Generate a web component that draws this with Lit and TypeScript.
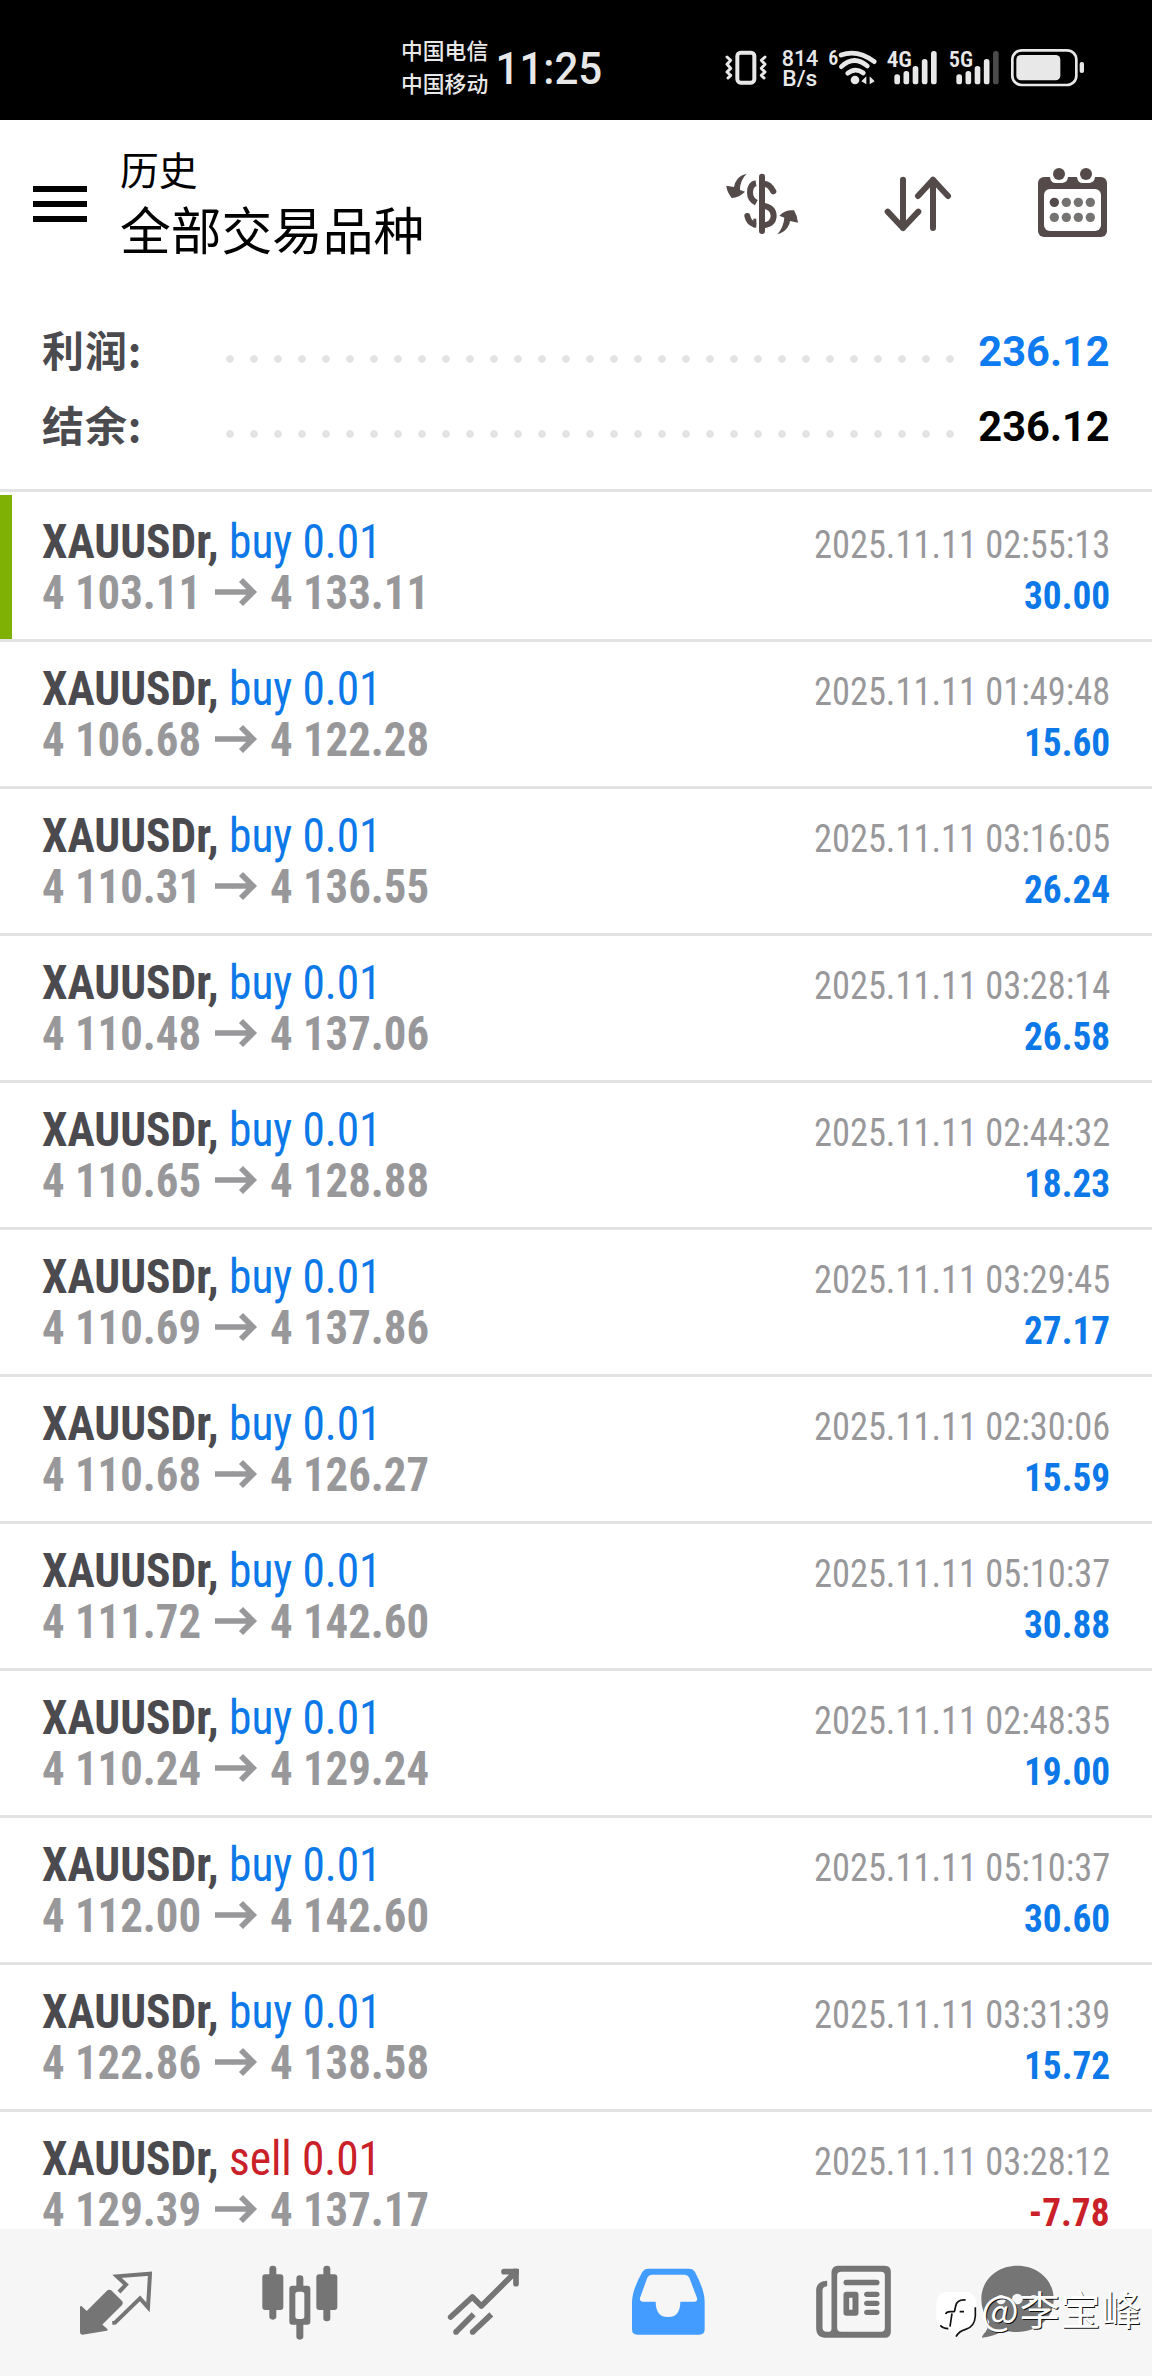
import { LitElement, html, svg, css } from "lit";
import { customElement, property } from "lit/decorators.js";
import { classMap } from "lit/directives/class-map.js";

interface Deal {
  side: "buy" | "sell";
  open: string;
  close: string;
  time: string;
  profit: string;
}

const deal = (side: "buy" | "sell", open: string, close: string, time: string, profit: string): Deal => ({
  side,
  open,
  close,
  time,
  profit,
});

const DEALS: Deal[] = [
  deal("buy", "4 103.11", "4 133.11", "2025.11.11 02:55:13", "30.00"),
  deal("buy", "4 106.68", "4 122.28", "2025.11.11 01:49:48", "15.60"),
  deal("buy", "4 110.31", "4 136.55", "2025.11.11 03:16:05", "26.24"),
  deal("buy", "4 110.48", "4 137.06", "2025.11.11 03:28:14", "26.58"),
  deal("buy", "4 110.65", "4 128.88", "2025.11.11 02:44:32", "18.23"),
  deal("buy", "4 110.69", "4 137.86", "2025.11.11 03:29:45", "27.17"),
  deal("buy", "4 110.68", "4 126.27", "2025.11.11 02:30:06", "15.59"),
  deal("buy", "4 111.72", "4 142.60", "2025.11.11 05:10:37", "30.88"),
  deal("buy", "4 110.24", "4 129.24", "2025.11.11 02:48:35", "19.00"),
  deal("buy", "4 112.00", "4 142.60", "2025.11.11 05:10:37", "30.60"),
  deal("buy", "4 122.86", "4 138.58", "2025.11.11 03:31:39", "15.72"),
  deal("sell", "4 129.39", "4 137.17", "2025.11.11 03:28:12", "-7.78"),
];

@customElement("status-bar")
class StatusBar extends LitElement {
  static styles = css`
    :host {
      display: flex;
      height: 120px;
      box-sizing: border-box;
      padding: 0 66px 0 401px;
      align-items: flex-start;
      background: #000;
      color: #e8e8e8;
    }
    .carriers {
      padding-top: 33px;
      font: 500 21.8px/33px "Noto Sans CJK SC", sans-serif;
      white-space: nowrap;
    }
    .clock {
      padding: 43px 0 0 8px;
      font: 500 45px/52px Roboto, sans-serif;
      transform: scaleX(0.935);
      transform-origin: 0 0;
    }
    .icons {
      margin: 27px 0 0 auto;
      width: 366px;
      height: 60px;
      fill: #e8e8e8;
      font-family: Roboto, sans-serif;
      font-weight: 500;
    }
    .narrow {
      font-stretch: 75%;
      font-weight: 600;
    }
    .line {
      fill: none;
      stroke: #e8e8e8;
      stroke-linecap: round;
      stroke-linejoin: round;
    }
    .dim {
      fill: #4a4a4a;
    }
  `;
  render() {
    const bars = (x: number, dimLast: boolean) =>
      [163, 153, 138, 117, 93].map(
        (y, i) => svg`<rect class=${dimLast && i === 4 ? "dim" : ""} x=${x + i * 27.5} y=${y} width="17" height=${193 - y} rx="8"/>`
      );
    return html`
      <div class="carriers"><div>中国电信</div><div>中国移动</div></div>
      <div class="clock">11:25</div>
      <svg class="icons" viewBox="60 21 1098 180">
        <rect class="line" x="112" y="98" width="51" height="90" rx="10" stroke-width="12" />
        <path class="line" stroke-width="9" d="M81 111l11 10-11 12 11 12-11 11 11 10-8 8M195 111l-11 10 11 12-11 12 11 11-11 10 8 8" />
        <text x="245" y="137" font-size="66" textLength="110" lengthAdjust="spacingAndGlyphs">814</text>
        <text x="247" y="198" font-size="64" textLength="105" lengthAdjust="spacingAndGlyphs">B/s</text>
        <text class="narrow" x="385" y="135" font-size="60" textLength="30" lengthAdjust="spacingAndGlyphs">6</text>
        <path class="line" stroke-width="14" d="M423 105q50-18 100 20M424 140q38-36 78-2M443 160q22-19 47-1" />
        <circle cx="465" cy="180" r="13" />
        <path d="M499 169v24l-15-9zM509 169v24l15-9z" />
        <text class="narrow" x="560" y="141" font-size="67" textLength="76" lengthAdjust="spacingAndGlyphs">4G</text>
        ${bars(583, false)}
        <text class="narrow" x="746" y="141" font-size="67" textLength="73" lengthAdjust="spacingAndGlyphs">5G</text>
        ${bars(769, true)}
        <rect class="line" x="937" y="91" width="192" height="104" rx="28" stroke-width="8" />
        <rect x="949" y="105" width="132" height="76" rx="14" />
        <rect x="1139" y="126" width="13" height="33" rx="6" />
      </svg>
    `;
  }
}

@customElement("title-bar")
class TitleBar extends LitElement {
  static styles = css`
    :host {
      display: flex;
      height: 188px;
      box-sizing: border-box;
      padding: 0 43px 0 33px;
      align-items: flex-start;
    }
    .menu {
      display: grid;
      gap: 9px;
      width: 54px;
      margin-top: 66px;
    }
    .stroke {
      height: 6px;
      background: #000;
    }
    .titles {
      margin: 23px auto 0 33px;
      color: #000;
      font-family: "Noto Sans CJK SC", sans-serif;
    }
    .section {
      font-size: 38.8px;
      line-height: 50px;
    }
    .symbol {
      font-size: 50.7px;
      line-height: 71px;
    }
    .actions {
      display: flex;
      gap: 84px;
      margin-top: 47px;
    }
    svg {
      display: block;
      height: 73px;
      fill: #544a49;
    }
    .calendar {
      margin-left: 1px;
    }
    .line {
      fill: none;
      stroke: #544a49;
      stroke-width: 18px;
      stroke-linecap: round;
      stroke-linejoin: round;
    }
    .butt {
      stroke-linecap: butt;
    }
    .pale {
      fill: #fff;
    }
    .dot {
      fill: #757272;
    }
  `;
  render() {
    return html`
      <div class="menu"><div class="stroke"></div><div class="stroke"></div><div class="stroke"></div></div>
      <div class="titles">
        <div class="section">历史</div>
        <div class="symbol">全部交易品种</div>
      </div>
      <div class="actions">
        <svg width="76" viewBox="72 81 228 219">
          <rect x="177" y="101" width="18" height="181" rx="9" />
          <path class="line butt" d="M168 130Q150 133 150 158Q150 178 169 188" />
          <path class="line" d="M192 131Q209 132 220 154" />
          <path class="line butt" d="M190 197Q221 203 221 228Q220 252 192 256" />
          <path class="line" d="M142 228Q146 247 160 252" />
          <rect x="160" y="236" width="9" height="27" />
          <path d="M140 101Q121 106 113 116Q104 127 102 141L79 137Q80 154 95 174Q118 172 135 155L120 150Q119 122 140 101Z" />
          <path d="M232 283Q252 277 262 263Q270 253 270 243L294 248Q293 229 282 211Q257 208 238 227L253 233Q251 261 232 283Z" />
        </svg>
        <svg width="68" viewBox="552 81 204 219">
          <path class="line" d="M609 119V264M563 215L609 264L655 215M699 264V119M654 168L699 119L744 168" />
        </svg>
        <svg class="calendar" width="72" viewBox="1011 81 216 219">
          <rect x="1014" y="111" width="207" height="180" rx="18" />
          <path class="pale" d="M1050 108V111Q1052 129 1067 129H1087Q1103 127 1104 111V108zM1131 108V111Q1133 129 1148 129H1168Q1184 127 1185 111V108z" />
          <circle cx="1077" cy="102" r="18" />
          <circle cx="1158" cy="102" r="18" />
          <rect class="pale" x="1032" y="147" width="171" height="126" rx="18" />
          ${[187, 232].map((y) =>
            [1063, 1099, 1135, 1171].map(
              (x) => svg`<circle class=${y === 187 && x === 1063 ? "" : "dot"} cx=${x} cy=${y} r="14"/>`
            )
          )}
        </svg>
      </div>
    `;
  }
}

@customElement("account-summary")
class AccountSummary extends LitElement {
  static styles = css`
    :host {
      display: block;
      height: 184px;
      box-sizing: border-box;
      padding: 5px 42px 0 42px;
      border-bottom: 3px solid #e3e3e3;
    }
    .entry {
      display: flex;
      height: 75px;
      align-items: center;
      font: 700 42px/75px Roboto, "Noto Sans CJK SC", sans-serif;
      color: #4a4a4f;
    }
    .label {
      width: 176px;
      margin-top: -4px;
      font-family: "Noto Sans CJK SC", sans-serif;
      letter-spacing: 0.9px;
    }
    .leader {
      width: 744px;
      height: 24px;
      margin: 17px auto 0 0;
      background: radial-gradient(circle at 12px 12px, #e2e2e2 3.3px, transparent 4.3px) 0 0 / 24px 24px;
    }
    .value {
      margin-top: 2px;
      transform: scaleX(0.99);
      transform-origin: 100% 0;
    }
    .blue {
      color: #0f7bf0;
    }
    .black {
      color: #000;
    }
  `;
  render() {
    return html`
      <div class="entry"><span class="label">利润:</span><span class="leader"></span><span class="value blue">236.12</span></div>
      <div class="entry"><span class="label">结余:</span><span class="leader"></span><span class="value black">236.12</span></div>
    `;
  }
}

@customElement("deal-row")
class DealRow extends LitElement {
  @property({ attribute: false }) deal!: Deal;
  @property({ type: Boolean }) marked = false;
  static styles = css`
    :host {
      display: block;
      font-family: "Roboto Condensed", Roboto, sans-serif;
      font-stretch: 75%;
    }
    .row {
      height: 147px;
      box-sizing: border-box;
      padding: 21px 42px 0 42px;
      border-bottom: 3px solid #e3e3e3;
    }
    .marked {
      background: linear-gradient(#7fb004, #7fb004) 0 0 / 12px 144px no-repeat;
    }
    .line {
      display: flex;
      justify-content: space-between;
      align-items: baseline;
      height: 51px;
      font-size: 48px;
      line-height: 51px;
      white-space: pre;
    }
    .name {
      transform: scaleX(0.947);
      transform-origin: 0 0;
    }
    .symbol {
      font-weight: 700;
      color: #4a4a4f;
    }
    .side {
      font-weight: 440;
      letter-spacing: -0.1px;
    }
    .blue {
      color: #0d78e8;
    }
    .red {
      color: #ca2028;
    }
    .prices {
      display: flex;
      align-items: baseline;
      font-weight: 700;
      color: #98989b;
    }
    .price {
      width: 159px;
      transform: scaleX(0.933);
      transform-origin: 0 0;
    }
    .arrow {
      width: 42px;
      height: 28px;
      margin: 0 13px 0 14.3px;
      overflow: visible;
      fill: none;
      stroke: #98989b;
      stroke-width: 5.7px;
      position: relative;
      top: -3.5px;
    }
    .time,
    .profit {
      font-size: 39px;
      transform: scaleX(0.934);
      transform-origin: 100% 0;
    }
    .time {
      color: #98989b;
    }
    .profit {
      font-weight: 700;
      transform: scaleX(0.956);
    }
  `;
  render() {
    const d = this.deal;
    const tone = { blue: d.side === "buy", red: d.side === "sell" };
    return html`<div class=${classMap({ row: true, marked: this.marked })}>
      <div class="line"><span class="name"><span class="symbol">XAUUSDr,</span> <span class=${classMap({ side: true, ...tone })}>${d.side} 0.01</span></span><span class="time">${d.time}</span></div>
      <div class="line"><span class="prices"><span class="price">${d.open}</span><svg class="arrow" viewBox="0 0 42 28"><path d="M0 14H38M26 2L38 14L26 26" /></svg><span class="price">${d.close}</span></span><span class=${classMap({ profit: true, ...tone })}>${d.profit}</span></div>
    </div>`;
  }
}

@customElement("tab-bar")
class TabBar extends LitElement {
  static styles = css`
    :host {
      display: flex;
      position: relative;
      height: 147px;
      box-sizing: border-box;
      padding: 0 22px 0 24px;
      background: #f6f6f6;
    }
    .tab {
      flex: 1;
      display: flex;
      align-items: center;
      justify-content: center;
    }
    .icon {
      width: 90px;
      height: 90px;
      overflow: visible;
      fill: #757575;
    }
    .active {
      fill: #439cff;
    }
    .line {
      fill: none;
      stroke: #757575;
      stroke-width: 17px;
      stroke-linecap: round;
      stroke-linejoin: round;
    }
    .butt {
      stroke-linecap: butt;
    }
    .sharp {
      stroke-width: 12px;
      stroke-linecap: butt;
      stroke-linejoin: miter;
    }
    .pale {
      fill: #f6f6f6;
    }
    .watermark {
      position: absolute;
      left: 935px;
      top: 55px;
      display: flex;
      align-items: center;
      color: #fff;
      font: 400 40px/48px "Noto Sans CJK SC", sans-serif;
      letter-spacing: 0.8px;
      text-shadow: 1px 1px 0 #111;
      white-space: nowrap;
    }
    .note {
      width: 48px;
      height: 48px;
      margin-right: -2px;
      overflow: visible;
    }
  `;
  render() {
    const tab = (content: unknown) => html`<div class="tab">${content}</div>`;
    return html`
      ${tab(html`<svg class="icon" viewBox="213 502 270 270">
        <path stroke="#757575" stroke-width="6" stroke-linejoin="round" d="M243 649L260 665L323 602Q328 598 333 602L364 633Q367 637 364 641L303 702L320 717L247 729Q243 729 243 725Z" />
        <path class="line sharp" d="M357 604L378 582L351 557L450 549L444 650L420 623L345 696L337 697" />
      </svg>`)}
      ${tab(html`<svg class="icon" viewBox="764 502 270 270">
        <rect x="786" y="551" width="63" height="107" rx="9" /><rect x="807" y="525" width="21" height="162" rx="10" />
        <rect x="867" y="585" width="63" height="117" rx="9" /><rect x="888" y="554" width="21" height="193" rx="10" />
        <rect class="pale" x="885" y="603" width="27" height="82" rx="8" />
        <rect x="948" y="551" width="63" height="107" rx="9" /><rect x="969" y="525" width="21" height="167" rx="10" />
      </svg>`)}
      ${tab(html`<svg class="icon" viewBox="60 142 270 270">
        <path class="line" d="M92 319L157 259L184 286L288 183M252 183H288V219" />
        <path d="M280 174H297V192z" />
        <path class="line butt" d="M108 364L161 311M158 364L214 311" />
        <circle cx="108" cy="364" r="8.5" /><circle cx="158" cy="364" r="8.5" />
      </svg>`)}
      ${tab(html`<svg class="icon active" viewBox="613 142 270 270">
        <path d="M686 174H808Q820 174 826 184Q855 238 855 274V356Q855 372 839 372H653Q637 372 637 356V274Q638 236 668 184Q674 174 686 174Z" />
        <path class="pale" d="M698 192H796Q805 193 809 201L832 262Q834 273 826 273H782Q782 319 745 319Q708 319 708 273H669Q659 272 661 262L683 201Q688 192 698 192Z" />
      </svg>`)}
      ${tab(html`<svg class="icon" viewBox="84.5 502 270 270">
        <path fill-rule="evenodd" d="M174 525H315Q333 525 333 543V723Q333 741 315 741H133Q109 738 109 714V598Q110 571 142 570V587Q128 588 128 600V712Q129 723 140 723H149Q155 722 155 714V545Q156 526 174 525ZM172 554V712Q172 723 184 723H304Q315 723 315 712V554Q315 543 304 543H184Q172 543 172 554Z" />
        <rect x="191" y="567" width="108" height="17" rx="8.5" />
        <path fill-rule="evenodd" d="M200 603H227Q236 603 236 612V666Q236 675 227 675H200Q191 675 191 666V612Q191 603 200 603ZM208 621V657H218V621Z" />
        <rect x="253" y="603" width="46" height="16" rx="8" /><rect x="253" y="630" width="46" height="16" rx="8" /><rect x="253" y="657" width="46" height="16" rx="8" />
      </svg>`)}
      ${tab(html`<svg class="icon" viewBox="641 502 270 270">
        <path d="M714 525C775 525 823 568 823 625S775 724 714 724Q690 724 675 718Q645 738 608 741Q607 736 619 723Q629 710 630 693Q606 665 606 625C606 568 653 525 714 525Z" />
        <circle class="pale" cx="665" cy="627" r="14" /><circle class="pale" cx="714" cy="625" r="16" /><circle class="pale" cx="763" cy="627" r="14" />
      </svg>`)}
      <div class="watermark">
        <svg class="note" viewBox="46 72 144 144">
          <path d="M86 95H136Q170 97 170 135V170Q168 205 138 212Q118 216 109 233L104 232L90 206Q50 206 50 172V130Q52 97 86 95Z" fill="#fff" />
          <path d="M167 142V168Q165 201 138 208Q118 213 109 230" fill="none" stroke="#111" stroke-width="5" />
          <path d="M138 120Q112 118 108 138L104 156M78 162Q80 155 92 155H104M120 155H133M97 160L91 200M62 196Q70 205 86 206" fill="none" stroke="#111" stroke-width="5" />
        </svg>
        <span>@李宝峰</span>
      </div>
    `;
  }
}

@customElement("app-root")
class AppRoot extends LitElement {
  static styles = css`
    :host {
      display: flex;
      flex-direction: column;
      width: 1152px;
      height: 2376px;
      overflow: hidden;
      background: #fff;
    }
    .deals {
      flex: 1;
      min-height: 0;
      overflow: hidden;
      padding-top: 3px;
    }
  `;
  render() {
    return html`
      <status-bar></status-bar>
      <title-bar></title-bar>
      <account-summary></account-summary>
      <div class="deals">${DEALS.map((d, i) => html`<deal-row .deal=${d} ?marked=${i === 0}></deal-row>`)}</div>
      <tab-bar></tab-bar>
    `;
  }
}
